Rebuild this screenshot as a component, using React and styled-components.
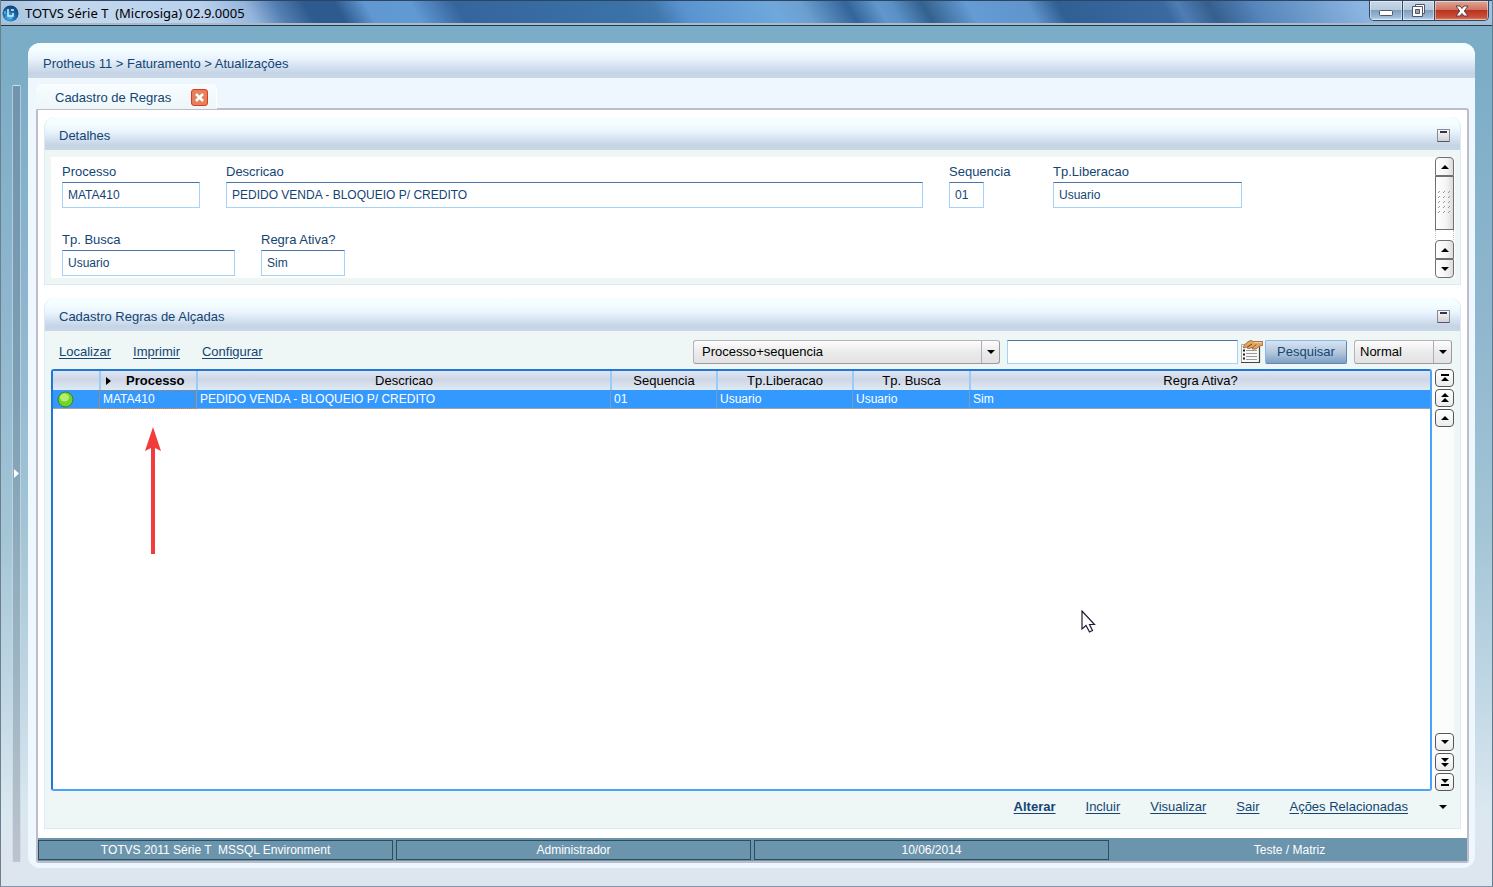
import { useState } from "react"
import styled, { createGlobalStyle, css } from "styled-components"

const GlobalStyle = createGlobalStyle`
  *, *::before, *::after {
    box-sizing: border-box;
  }

  body {
    margin: 0;
    color: #134573;
    font: 13px/16px "Liberation Sans", Arial, sans-serif;
  }

  button, input, select {
    font: inherit;
    color: inherit;
    margin: 0;
  }
`

const Window = styled.div`
  min-height: 100vh;
  display: flex;
  flex-direction: column;
  border-left: 1px solid #6b7f8d;
  border-right: 1px solid #5f7c8c;
  border-bottom: 1px solid #8694a6;
  background: linear-gradient(#7aadc8 0, #7cadc7 8%, #8fb6ce 35%, #a3c5d6 60%, #c4d9e6 80%, #dbe8f0 92%, #dde5ef 97%);
`

const TitleBar = styled.header`
  height: 26px;
  flex: none;
  display: flex;
  align-items: flex-start;
  justify-content: space-between;
  padding-right: 3px;
  border-top: 1px solid #2d4560;
  border-bottom: 1px solid #22384a;
  box-shadow: inset 0 -2px 0 #a9bac8;
  background: linear-gradient(
    60deg,
    #a3c1de 0%, #c3d8ed 5%, #b9d1ee 14%, #94b5dc 17%, #557fb2 19%, #2d5a8f 21%, #2d5a8f 23%,
    #6198d2 25%, #6099d3 28%, #35659c 31%, #3a72a8 42%, #4077ad 44%, #5a94d0 46%,
    #6fa8dc 52%, #6b9fd0 54%, #33659a 57%, #6197cc 59%, #5a90c6 60%, #33618f 62%,
    #659cd4 65%, #5f94cc 69%, #2f5f93 71%, #3a6aa0 78%, #4f7db4 79%, #355f8e 81%,
    #5585bb 84%, #8bb4e0 91%, #9fc1e4 100%
  );
`

const WindowTitle = styled.h1`
  margin: 0;
  height: 22px;
  display: flex;
  align-items: center;
  gap: 6px;
  padding: 2px 0 0 1px;
  color: #000;
  font: 13px/18px "Noto Sans", "Open Sans", sans-serif;
  white-space: pre;
`

const WindowControls = styled.div`
  display: flex;
  border: 1px solid #33465c;
  border-top: 0;
  border-radius: 0 0 5px 5px;
  overflow: hidden;
`

const ControlButton = styled.button`
  width: ${(props) => (props.$close ? 54 : 32)}px;
  height: 19px;
  padding: 0;
  display: flex;
  align-items: center;
  justify-content: center;
  border: 0;
  border-left: ${(props) => (props.$first ? 0 : "1px solid #33465c")};
  box-shadow: inset 0 0 0 1px rgba(255, 255, 255, 0.45);
  background: ${(props) =>
    props.$close
      ? "linear-gradient(#e0a898, #d07460 45%, #b93420 50%, #c9503a 85%, #e08868)"
      : "linear-gradient(#c8d8e8, #b6cade 45%, #7f9fbe 50%, #9dbbd8 85%, #c3dcf2)"};
`

const Workspace = styled.div`
  flex: 1;
  display: flex;
  gap: 7px;
  padding: 17px 17px 18px 11px;
`

const SideHandle = styled.button`
  width: 9px;
  flex: none;
  margin: 42px 0 6px;
  padding: 0;
  display: flex;
  align-items: center;
  justify-content: center;
  border: 1px solid rgba(225, 238, 246, 0.6);
  border-radius: 2px;
  background: linear-gradient(#6f94ac, #7d9fb5 40%, #9cb4c2 75%, #bcc3ce);
`

const Shell = styled.main`
  flex: 1;
  min-width: 0;
  display: flex;
  flex-direction: column;
  border-radius: 12px;
  overflow: hidden;
  background: #eef6fe;
`

const headerFill = css`
  background: linear-gradient(#f6ffff 0, #f4feff 20%, #eaf3fd 45%, #d6e3f2 65%, #c6d5e6 85%, #c8d6e6 100%);
`

const Breadcrumb = styled.nav`
  height: 35px;
  padding: 6px 15px 0;
  display: flex;
  align-items: center;
  ${headerFill}
`

const TabStrip = styled.div`
  position: relative;
  z-index: 1;
  display: flex;
  padding: 6px 8px 0;
  margin-bottom: -1px;
`

const Tab = styled.div`
  width: 181px;
  height: 25px;
  padding: 2px 8px 0 19px;
  display: flex;
  align-items: center;
  justify-content: space-between;
  border-radius: 5px 5px 0 0;
  border-right: 1px solid #fff;
  background: linear-gradient(#f8fdff, #eef6f8);
`

const TabClose = styled.button`
  width: 17px;
  height: 17px;
  padding: 0;
  display: flex;
  align-items: center;
  justify-content: center;
  border: 1px solid #dc3c1c;
  border-radius: 3px;
  background: #e4805c;
`

const Frame = styled.div`
  flex: 1;
  margin: 0 6px 5px 8px;
  display: flex;
  flex-direction: column;
  border: 2px solid #bdbdc9;
  border-radius: 3px;
  background: #fff;
`

const Groups = styled.div`
  flex: 1;
  display: flex;
  flex-direction: column;
  gap: 13px;
  padding: 7px 6px 9px;
`

const Group = styled.section`
  display: flex;
  flex-direction: column;
  flex: ${(props) => (props.$grow ? 1 : "none")};
  border: 1px solid #dceaf3;
  border-top: 0;
  border-radius: 10px 10px 0 0;
  background: #eef6f6;
`

const GroupHeader = styled.div`
  height: 33px;
  padding: 3px 10px 0 14px;
  display: flex;
  align-items: center;
  justify-content: space-between;
  border-radius: 10px 10px 0 0;
  ${headerFill}
`

const GroupTitle = styled.h2`
  margin: 0;
  padding-top: 2px;
  font: inherit;
`

const CollapseButton = styled.button`
  width: 13px;
  height: 13px;
  padding: 1px 2px;
  border: 1px solid #8a8a96;
  border-bottom-color: #55556a;
  background: linear-gradient(#fafafa, #d2d2d6);
  border-radius: 1px;

  &::before {
    content: "";
    display: block;
    height: 2px;
    margin-bottom: 7px;
    background: #33334d;
  }
`

const DetailsBody = styled.div`
  display: flex;
  justify-content: space-between;
  margin: 7px 5px 6px 6px;
  background: #fff;
`

const FieldRows = styled.div`
  flex: 1;
  min-width: 0;
  display: flex;
  flex-direction: column;
  gap: 24px;
  padding: 7px 12px 2px 11px;
`

const FieldRow = styled.div`
  display: flex;
  gap: 26px;
`

const Field = styled.label`
  width: ${(props) => props.$width}px;
  display: flex;
  flex-direction: column;
  gap: 2px;
  white-space: nowrap;
`

const TextInput = styled.input`
  width: ${(props) => (props.$width ? `${props.$width}px` : "100%")};
  height: ${(props) => props.$height || 26}px;
  padding: 0 5px;
  border: 1px solid #a5d2fa;
  border-top-color: #4d74a6;
  background: #fff;
  font-size: 12px;
`

const ScrollBar = styled.div`
  width: 19px;
  margin-right: 1px;
  display: flex;
  flex-direction: column;
`

const ScrollButton = styled.button`
  height: ${(props) => (props.$thumb ? 54 : 19)}px;
  padding: 0;
  display: flex;
  align-items: center;
  justify-content: center;
  border: 1px solid #707074;
  border-radius: ${(props) => props.$radius || "0"};
  background: linear-gradient(90deg, #fff, #f4f4f4 60%, #dcdcdc);
`

const ScrollGap = styled.div`
  flex: 1;
  border: 1px dotted #c4c4c8;
  border-width: 0 1px;
`

const Toolbar = styled.div`
  height: 38px;
  display: flex;
  align-items: center;
  justify-content: space-between;
  padding: 4px 8px 0 14px;
`

const ActionLinks = styled.div`
  display: flex;
  gap: 22px;
`

const ActionLink = styled.a`
  color: #134573;
  font-weight: ${(props) => (props.$strong ? "bold" : "normal")};
  text-decoration: underline;
  text-underline-offset: 2px;
`

const SearchTools = styled.form`
  display: flex;
  align-items: center;
  gap: 7px;
`

const SearchGroup = styled.div`
  display: flex;
  align-items: center;
  gap: 2px;
`

const SelectBox = styled.div`
  display: grid;
  width: ${(props) => props.$width}px;
  height: 24px;
  border: 1px solid #b4b4ba;
  border-right-color: #9a9aa0;
  border-bottom-color: #9a9aa0;
  border-radius: 3px;
  background: linear-gradient(#fdfdfd, #ebebeb 50%, #e2e2e2);
  color: #000;

  > * {
    grid-area: 1 / 1;
  }
`

const Select = styled.select`
  appearance: none;
  width: 100%;
  padding: 0 20px 0 ${(props) => props.$inset}px;
  border: 0;
  background: transparent;
`

const SelectArrow = styled.span`
  width: 18px;
  justify-self: end;
  display: flex;
  align-items: center;
  justify-content: center;
  border-left: 1px solid #aeaeb4;
  pointer-events: none;
`

const LookupButton = styled.button`
  width: 23px;
  height: 26px;
  padding: 0;
  border: 0;
  background: none;

  svg {
    display: block;
  }
`

const SearchButton = styled.button`
  width: 82px;
  height: 24px;
  padding: 0;
  border: 1px solid #8cb8e6;
  border-right-color: #5f87b4;
  border-bottom-color: #5f87b4;
  border-radius: 2px;
  background: linear-gradient(#d6e4f4, #b4c8de 50%, #7f9fc2);
`

const GridArea = styled.div`
  position: relative;
  flex: 1;
  display: flex;
  margin: 0 6px;
`

const GridBox = styled.div`
  flex: 1;
  min-width: 0;
  min-height: 160px;
  border: 2px solid #4aa2fb;
  border-top-color: #2277d6;
  border-left-color: #2277d6;
  border-radius: 3px;
  background: #fff;
`

const Table = styled.table`
  width: 100%;
  table-layout: fixed;
  border-collapse: separate;
  border-spacing: 0;
  line-height: 18px;
`

const Col = styled.col`
  width: ${(props) => (props.$width ? `${props.$width}px` : "auto")};
`

const HeadCell = styled.th`
  height: 19px;
  padding: 0;
  border-left: ${(props) => (props.$first ? 0 : "2px solid #9accfa")};
  background: linear-gradient(#dde6f2, #cfd6e6 45%, #dfeaf3);
  color: #000;
  font-weight: ${(props) => (props.$sorted ? "bold" : "normal")};
`

const SortedHead = styled.span`
  display: flex;
  align-items: center;
  gap: 15px;
  padding-left: 5px;
`

const Cell = styled.td`
  height: 19px;
  padding: 0 0 0 ${(props) => (props.$first ? 4 : 3)}px;
  border-bottom: 1px solid #a0a4a8;
  border-left: ${(props) => (props.$first ? 0 : "1px solid #7d9cbc")};
  background: #3399ff;
  color: #fff;
  font-size: 12px;
  ${(props) =>
    props.$focused &&
    css`
      outline: 1px dotted #c57a3c;
      outline-offset: -1px;
    `}

  svg {
    display: block;
  }
`

const Pager = styled.div`
  width: 22px;
  display: flex;
  flex-direction: column;
  justify-content: space-between;
  padding-left: 3px;
  background: #fbfdfd;
`

const PagerStack = styled.div`
  display: grid;
  gap: 2px;
`

const PagerButton = styled.button`
  width: 19px;
  height: 18px;
  padding: 0;
  display: flex;
  align-items: center;
  justify-content: center;
  border: 1px solid #56565a;
  border-radius: 4px;
  background: linear-gradient(#fff, #ececec);
`

const RedArrow = styled.svg`
  position: absolute;
  left: 94px;
  top: 58px;
`

const Pointer = styled.svg`
  position: absolute;
  left: 75%;
  top: 241px;
  margin-left: -22px;
`

const GroupFooter = styled.div`
  height: 37px;
  display: flex;
  align-items: center;
  justify-content: flex-end;
  gap: 30px;
  padding: 0 12px 5px;
`

const MenuButton = styled.button`
  padding: 0;
  border: 0;
  background: none;
  display: flex;
`

const StatusBar = styled.footer`
  display: grid;
  grid-template-columns: repeat(4, 1fr);
  gap: 3px;
  height: 23px;
  padding: 2px 0 1px;
  background: #6b94ad;
  color: #fff;
`

const StatusCell = styled.div`
  display: flex;
  align-items: center;
  justify-content: center;
  white-space: pre;
  font-size: 12px;
  border: ${(props) => (props.$plain ? 0 : "1px solid #2f4c5a")};
`

const glyphs = {
  up: "M5 3 9 7H1Z",
  down: "M1 3H9L5 7Z",
  first: "M1 1H9V3H1Z M5 4 9 8H1Z",
  last: "M1 2H9L5 6Z M1 7H9V9H1Z",
  pageUp: "M5 0 9 4H1Z M5 5 9 9H1Z",
  pageDown: "M1 1H9L5 5Z M1 6H9L5 10Z",
}

function Glyph({ name }) {
  return (
    <svg width="10" height="10" viewBox="0 0 10 10" aria-hidden="true">
      <path d={glyphs[name]} fill="#000" />
    </svg>
  )
}

function AppLogo() {
  return (
    <svg width="17" height="17" viewBox="0 0 17 17" aria-hidden="true">
      <defs>
        <radialGradient id="globe" cx="40%" cy="75%" r="75%">
          <stop offset="0" stopColor="#47b5ea" />
          <stop offset="0.5" stopColor="#1d6fae" />
          <stop offset="1" stopColor="#123f70" />
        </radialGradient>
      </defs>
      <circle cx="8.5" cy="8.5" r="8" fill="url(#globe)" />
      <path d="M6 4v7h5V8M9 5h3" fill="none" stroke="#d9f1fb" strokeWidth="1.5" />
      <path d="M3 6v3M8 13h2" stroke="#9bd0ee" strokeWidth="1" />
    </svg>
  )
}

function MinimizeIcon() {
  return (
    <svg width="16" height="14" viewBox="0 0 16 14" aria-hidden="true">
      <rect x="1.5" y="6.5" width="13" height="5" rx="1" fill="#fff" stroke="#55546a" />
    </svg>
  )
}

function RestoreIcon() {
  return (
    <svg width="15" height="15" viewBox="0 0 15 15" aria-hidden="true">
      <path d="M4.500 1.500H13.500V10.500H4.500Z" fill="#fff" stroke="#55546a" />
      <path d="M1.500 3.500H11.500V13.500H1.500Z" fill="#fff" stroke="#55546a" />
      <path d="M4.500 6.500H8.500V10.500H4.500Z" fill="#8fa6c4" stroke="#55546a" />
    </svg>
  )
}

function CloseIcon() {
  return (
    <svg width="14" height="12" viewBox="0 0 14 12" aria-hidden="true">
      <path
        d="M1 1H5L7 3.500 9 1H13L9.300 6 13 11H9L7 8.500 5 11H1L4.700 6Z"
        fill="#fff"
        stroke="#5d3a44"
      />
    </svg>
  )
}

function LookupIcon() {
  return (
    <svg width="23" height="26" viewBox="0 0 23 26" aria-hidden="true">
      <path d="M1.500 5.500H19.500V23.500H1.500Z" fill="#f8f8f8" stroke="#aaa" />
      <path d="M1 23.500H19.500V8" fill="none" stroke="#444" strokeWidth="1.200" />
      <path d="M6 11.500H17M6 14.500H17M6 17.500H17M6 20.500H17" stroke="#9a9a9a" />
      <path d="M3 11.500H5M3 15.500H5M3 19.500H5" stroke="#222" strokeWidth="2" />
      <path
        d="M3 8C5 5 8 2 11 1.500L13 2.500H23V6L19 7.500 16 10 12 10 13.500 8 9 9.500 7 9 8 7.500 4 9Z"
        fill="#e6a55f"
        stroke="#8a5a2c"
        strokeWidth="0.8"
      />
      <path d="M8 7.500 12 5M14 7.500 16 5.500" stroke="#6d421c" fill="none" />
      <path d="M14 3.500H22" stroke="#f7cb93" />
    </svg>
  )
}

function StatusDot() {
  return (
    <svg width="17" height="17" viewBox="0 0 17 17" aria-label="Ativo">
      <circle cx="8.500" cy="8.500" r="7.500" fill="#72d42a" stroke="#3c7d2c" />
      <ellipse cx="7.500" cy="6.500" rx="4.500" ry="4" fill="#b4ee70" />
    </svg>
  )
}

function ThumbGrip() {
  const rows = [0, 5, 10, 15, 20]
  return (
    <svg width="13" height="24" viewBox="0 0 13 24" aria-hidden="true">
      {rows.map((y) => (
        <path key={y} d={`M0 ${y + 2}l2-2M5 ${y + 2}l2-2M10 ${y + 2}l2-2`} stroke="#999" />
      ))}
    </svg>
  )
}

const fieldRows = [
  [
    { label: "Processo", value: "MATA410", width: 138 },
    { label: "Descricao", value: "PEDIDO VENDA - BLOQUEIO P/ CREDITO", width: 697 },
    { label: "Sequencia", value: "01", width: 78, inputWidth: 35 },
    { label: "Tp.Liberacao", value: "Usuario", width: 189 },
  ],
  [
    { label: "Tp. Busca", value: "Usuario", width: 173 },
    { label: "Regra Ativa?", value: "Sim", width: 84 },
  ],
]

const columns = [
  { title: "Descricao", value: "PEDIDO VENDA - BLOQUEIO P/ CREDITO", width: 414 },
  { title: "Sequencia", value: "01", width: 106 },
  { title: "Tp.Liberacao", value: "Usuario", width: 136 },
  { title: "Tp. Busca", value: "Usuario", width: 117 },
  { title: "Regra Ativa?", value: "Sim" },
]

function GroupPanel({ title, grow, children }) {
  return (
    <Group $grow={grow}>
      <GroupHeader>
        <GroupTitle>{title}</GroupTitle>
        <CollapseButton type="button" aria-label={`Recolher ${title}`} />
      </GroupHeader>
      {children}
    </Group>
  )
}

function Dropdown({ label, options, width, inset }) {
  return (
    <SelectBox $width={width}>
      <Select aria-label={label} $inset={inset}>
        {options.map((option) => (
          <option key={option}>{option}</option>
        ))}
      </Select>
      <SelectArrow>
        <Glyph name="down" />
      </SelectArrow>
    </SelectBox>
  )
}

function Details() {
  return (
    <GroupPanel title="Detalhes">
      <DetailsBody>
        <FieldRows>
          {fieldRows.map((row, index) => (
            <FieldRow key={index}>
              {row.map((field) => (
                <Field key={field.label} $width={field.width}>
                  {field.label}
                  <TextInput readOnly value={field.value} $width={field.inputWidth} />
                </Field>
              ))}
            </FieldRow>
          ))}
        </FieldRows>
        <ScrollBar>
          <ScrollButton type="button" aria-label="Subir" $radius="4px 4px 0 0">
            <Glyph name="up" />
          </ScrollButton>
          <ScrollButton type="button" aria-label="Rolar" $thumb>
            <ThumbGrip />
          </ScrollButton>
          <ScrollGap />
          <ScrollButton type="button" aria-label="Subir" $radius="4px 4px 0 0">
            <Glyph name="up" />
          </ScrollButton>
          <ScrollButton type="button" aria-label="Descer" $radius="0 0 4px 4px">
            <Glyph name="down" />
          </ScrollButton>
        </ScrollBar>
      </DetailsBody>
    </GroupPanel>
  )
}

function RulesTable() {
  return (
    <Table>
      <colgroup>
        <Col $width={46} />
        <Col $width={97} />
        {columns.map((column) => (
          <Col key={column.title} $width={column.width} />
        ))}
      </colgroup>
      <thead>
        <tr>
          <HeadCell $first />
          <HeadCell $sorted>
            <SortedHead>
              <svg width="5" height="8" viewBox="0 0 5 8" aria-hidden="true">
                <path d="M0 0 5 4 0 8Z" />
              </svg>
              Processo
            </SortedHead>
          </HeadCell>
          {columns.map((column) => (
            <HeadCell key={column.title}>{column.title}</HeadCell>
          ))}
        </tr>
      </thead>
      <tbody>
        <tr>
          <Cell $first>
            <StatusDot />
          </Cell>
          <Cell $focused>MATA410</Cell>
          {columns.map((column) => (
            <Cell key={column.title}>{column.value}</Cell>
          ))}
        </tr>
      </tbody>
    </Table>
  )
}

function PagerButtons({ items }) {
  return (
    <PagerStack>
      {items.map(([name, label]) => (
        <PagerButton key={name} type="button" aria-label={label}>
          <Glyph name={name} />
        </PagerButton>
      ))}
    </PagerStack>
  )
}

function Rules() {
  const [term, setTerm] = useState("")

  return (
    <GroupPanel title="Cadastro Regras de Alçadas" grow>
      <Toolbar>
        <ActionLinks>
          <ActionLink href="#localizar">Localizar</ActionLink>
          <ActionLink href="#imprimir">Imprimir</ActionLink>
          <ActionLink href="#configurar">Configurar</ActionLink>
        </ActionLinks>
        <SearchTools onSubmit={(event) => event.preventDefault()}>
          <Dropdown label="Ordem" options={["Processo+sequencia"]} width={307} inset={8} />
          <SearchGroup>
            <TextInput
              aria-label="Pesquisa"
              value={term}
              onChange={(event) => setTerm(event.target.value)}
              $width={231}
              $height={24}
            />
            <LookupButton type="button" aria-label="Consultar">
              <LookupIcon />
            </LookupButton>
            <SearchButton type="submit">Pesquisar</SearchButton>
          </SearchGroup>
          <Dropdown label="Modo" options={["Normal"]} width={98} inset={5} />
        </SearchTools>
      </Toolbar>
      <GridArea>
        <GridBox>
          <RulesTable />
        </GridBox>
        <Pager>
          <PagerButtons
            items={[
              ["first", "Primeiro"],
              ["pageUp", "Página anterior"],
              ["up", "Anterior"],
            ]}
          />
          <PagerButtons
            items={[
              ["down", "Próximo"],
              ["pageDown", "Próxima página"],
              ["last", "Último"],
            ]}
          />
        </Pager>
        <RedArrow width="16" height="127" viewBox="0 0 16 127" aria-hidden="true">
          <path d="M8 0 16 24 10 21V127H6V21L0 24Z" fill="#f23c3c" />
        </RedArrow>
        <Pointer width="15" height="24" viewBox="0 0 15 24" aria-hidden="true">
          <path
            d="M1 1V19L5 15.500 8.500 22 11.500 20.500 8.500 14.500H13.500Z"
            fill="#fff"
            stroke="#1d1d38"
            strokeWidth="1.200"
          />
        </Pointer>
      </GridArea>
      <GroupFooter>
        <ActionLink href="#alterar" $strong>
          Alterar
        </ActionLink>
        <ActionLink href="#incluir">Incluir</ActionLink>
        <ActionLink href="#visualizar">Visualizar</ActionLink>
        <ActionLink href="#sair">Sair</ActionLink>
        <ActionLink href="#acoes">Ações Relacionadas</ActionLink>
        <MenuButton type="button" aria-label="Mais ações">
          <Glyph name="down" />
        </MenuButton>
      </GroupFooter>
    </GroupPanel>
  )
}

export default function App() {
  return (
    <Window>
      <GlobalStyle />
      <TitleBar>
        <WindowTitle>
          <AppLogo />
          {"TOTVS Série T  (Microsiga) 02.9.0005"}
        </WindowTitle>
        <WindowControls>
          <ControlButton type="button" aria-label="Minimizar" $first>
            <MinimizeIcon />
          </ControlButton>
          <ControlButton type="button" aria-label="Restaurar">
            <RestoreIcon />
          </ControlButton>
          <ControlButton type="button" aria-label="Fechar" $close>
            <CloseIcon />
          </ControlButton>
        </WindowControls>
      </TitleBar>
      <Workspace>
        <SideHandle type="button" aria-label="Abrir menu">
          <svg width="5" height="9" viewBox="0 0 5 9" aria-hidden="true">
            <path d="M0 0 5 4.500 0 9Z" fill="#fff" />
          </svg>
        </SideHandle>
        <Shell>
          <Breadcrumb>Protheus 11 &gt; Faturamento &gt; Atualizações</Breadcrumb>
          <TabStrip>
            <Tab>
              Cadastro de Regras
              <TabClose type="button" aria-label="Fechar aba">
                <svg width="9" height="9" viewBox="0 0 9 9" aria-hidden="true">
                  <path d="M1 1 8 8M8 1 1 8" stroke="#fff" strokeWidth="2.500" />
                </svg>
              </TabClose>
            </Tab>
          </TabStrip>
          <Frame>
            <Groups>
              <Details />
              <Rules />
            </Groups>
            <StatusBar>
              <StatusCell>{"TOTVS 2011 Série T  MSSQL Environment"}</StatusCell>
              <StatusCell>Administrador</StatusCell>
              <StatusCell>10/06/2014</StatusCell>
              <StatusCell $plain>Teste / Matriz</StatusCell>
            </StatusBar>
          </Frame>
        </Shell>
      </Workspace>
    </Window>
  )
}
